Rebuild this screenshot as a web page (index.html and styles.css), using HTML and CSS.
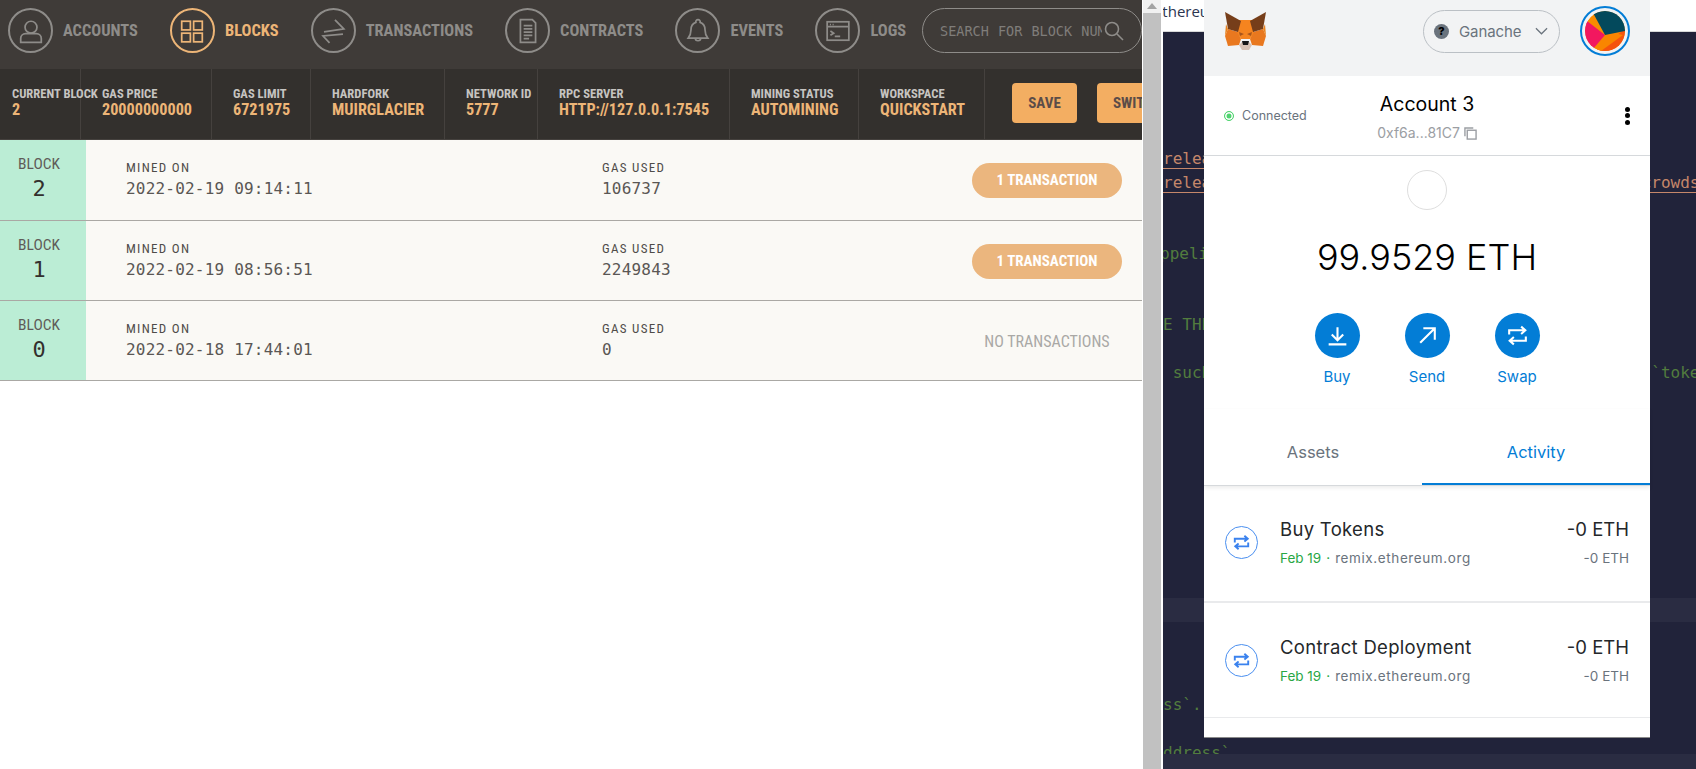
FILE: index.html
```html
<!DOCTYPE html>
<html lang="en">
<head>
  <meta charset="UTF-8">
  <title>Ganache and MetaMask</title>
  <link rel="stylesheet" href="styles.css">
</head>
<body>
  <div class="ganache">
    <nav class="topbar">
      <a class="nav-item">
        <span class="nav-icon"><svg viewBox="0 0 24 24"><circle cx="12" cy="8.500" r="5.500"/><path d="M2.500 22.500v-3.500c0-2.500 2-4.500 4.500-4.500h10c2.500 0 4.500 2 4.500 4.500v3.500z"/></svg></span>
        <span class="nav-label">ACCOUNTS</span>
      </a>
      <a class="nav-item active">
        <span class="nav-icon"><svg viewBox="0 0 24 24"><rect x="2.500" y="3" width="8" height="8"/><rect x="13.500" y="3" width="8" height="8"/><rect x="2.500" y="14" width="8" height="8"/><rect x="13.500" y="14" width="8" height="8"/></svg></span>
        <span class="nav-label">BLOCKS</span>
      </a>
      <a class="nav-item">
        <span class="nav-icon"><svg viewBox="0 0 24 24"><path d="M3.700 12.900L22 10.100L13.800 1.800M21.200 14.800L2.800 16.600L8.800 23"/></svg></span>
        <span class="nav-label">TRANSACTIONS</span>
      </a>
      <a class="nav-item">
        <span class="nav-icon"><svg viewBox="0 0 24 24"><path d="M7 1.500h9l3 3v18H5v-21z"/><path d="M8 7h8M8 10h8M8 13h8M8 16h8M8 19h5"/></svg></span>
        <span class="nav-label">CONTRACTS</span>
      </a>
      <a class="nav-item">
        <span class="nav-icon"><svg viewBox="0 0 24 24"><path d="M12 1.500a2 2 0 0 1 2 2.500c3 1 4.500 3.500 4.500 7 0 3.500 1 5.500 2.500 7.500H3c1.500-2 2.500-4 2.500-7.500 0-3.500 1.500-6 4.500-7a2 2 0 0 1 2-2.500z"/><path d="M9.500 18.500a2.500 2.500 0 0 0 5 0"/></svg></span>
        <span class="nav-label">EVENTS</span>
      </a>
      <a class="nav-item">
        <span class="nav-icon"><svg viewBox="0 0 24 24"><rect x="2" y="3.500" width="20" height="17"/><path d="M2 8h20M5 12l3 2-3 2M9 17h5M4.500 6h1M7 6h1"/></svg></span>
        <span class="nav-label">LOGS</span>
      </a>
      <div class="search">
        <span class="search-text">SEARCH FOR BLOCK NUMBERS OR TX HASHES</span>
        <svg class="search-icon" viewBox="0 0 20 20"><circle cx="8" cy="8" r="6.500"/><path d="M13 13l6 6"/></svg>
      </div>
    </nav>

    <div class="statusbar">
      <div class="stat"><div class="stat-label">CURRENT BLOCK</div><div class="stat-value">2</div></div>
      <div class="stat"><div class="stat-label">GAS PRICE</div><div class="stat-value">20000000000</div></div>
      <div class="stat"><div class="stat-label">GAS LIMIT</div><div class="stat-value">6721975</div></div>
      <div class="stat"><div class="stat-label">HARDFORK</div><div class="stat-value">MUIRGLACIER</div></div>
      <div class="stat"><div class="stat-label">NETWORK ID</div><div class="stat-value">5777</div></div>
      <div class="stat"><div class="stat-label">RPC SERVER</div><div class="stat-value">HTTP://127.0.0.1:7545</div></div>
      <div class="stat"><div class="stat-label">MINING STATUS</div><div class="stat-value">AUTOMINING</div></div>
      <div class="stat"><div class="stat-label">WORKSPACE</div><div class="stat-value">QUICKSTART</div></div>
      <div class="status-actions">
        <button class="action-btn">SAVE</button>
        <button class="action-btn">SWITCH</button>
      </div>
    </div>

    <div class="block-row first">
      <div class="block-num"><div class="block-word">BLOCK</div><div class="block-val">2</div></div>
      <div class="block-col mined"><div class="col-label">MINED ON</div><div class="col-val">2022-02-19 09:14:11</div></div>
      <div class="block-col used"><div class="col-label">GAS USED</div><div class="col-val">106737</div></div>
      <div class="tx-pill">1 TRANSACTION</div>
    </div>
    <div class="block-row">
      <div class="block-num"><div class="block-word">BLOCK</div><div class="block-val">1</div></div>
      <div class="block-col mined"><div class="col-label">MINED ON</div><div class="col-val">2022-02-19 08:56:51</div></div>
      <div class="block-col used"><div class="col-label">GAS USED</div><div class="col-val">2249843</div></div>
      <div class="tx-pill">1 TRANSACTION</div>
    </div>
    <div class="block-row">
      <div class="block-num"><div class="block-word">BLOCK</div><div class="block-val">0</div></div>
      <div class="block-col mined"><div class="col-label">MINED ON</div><div class="col-val">2022-02-18 17:44:01</div></div>
      <div class="block-col used"><div class="col-label">GAS USED</div><div class="col-val">0</div></div>
      <div class="tx-none">NO TRANSACTIONS</div>
    </div>
  </div>

  <div class="scrollbar"><div class="scroll-arrow"></div><div class="scroll-thumb"></div></div>

  <div class="editor">
    <div class="editor-tab">Ethereum</div>
    <div class="editor-body">
      <pre class="code"><span class="link">release</span>
<span class="link">release</span>                                           <span class="link nudge">crowdsale</span>


<span class="cmt nudge">ppelin</span>


<span class="cmt">E THE</span>

<span class="cmt"> such</span>                                              <span class="cmt nudge">`token</span>









<span class="current"> </span>



<span class="cmt">ss`.</span>

<span class="cmt">ddress`</span></pre>
      <div class="terminal"></div>
    </div>
  </div>

  <div class="metamask">
    <header class="mm-header">
      <svg class="fox" viewBox="0 0 41 38">
        <polygon points="3,17 13,20 16,27 14,33 3,34 0,24" fill="#e9781f"/>
        <polygon points="38,17 28,20 25,27 27,33 38,34 41,24" fill="#e9781f"/>
        <polygon points="13,8 28,8 29,20 25,27 16,27 12,20" fill="#f5841f"/>
        <polygon points="0,0 16,9 13,20 3,17" fill="#763e1a"/>
        <polygon points="41,0 25,9 28,20 38,17" fill="#763e1a"/>
        <polygon points="3,17 0,24 1,12" fill="#e8821e"/>
        <polygon points="38,17 41,24 40,12" fill="#e8821e"/>
        <polygon points="14,20 19,22 15,24" fill="#a8561c"/>
        <polygon points="27,20 22,22 26,24" fill="#a8561c"/>
        <polygon points="14,33 17,30 24,30 27,33 24,38 17,38" fill="#d7c1b3"/>
        <polygon points="17,29 24,29 23,33 18,33" fill="#161616"/>
      </svg>
      <div class="network">
        <span class="network-dot">?</span>
        <span class="network-name">Ganache</span>
        <svg class="chevron" viewBox="0 0 14 8"><path d="M1 1l6 6 6-6"/></svg>
      </div>
      <div class="avatar">
        <svg viewBox="0 0 40 40">
          <circle cx="20" cy="20" r="20" fill="#f98b00"/>
          <polygon points="40,18 40,40 10,40" fill="#f5530d"/>
          <polygon points="38,24 16,40 8,40 10,28 20,20" fill="#f98500"/>
          <polygon points="7,0 40,0 40,20 20,24" fill="#03495c"/>
          <polygon points="0,10 2,10 20,24 8,38 0,36" fill="#f2175f"/>
        </svg>
      </div>
    </header>

    <section class="account-row">
      <div class="connected"><span class="connected-dot"></span>Connected</div>
      <div class="account-info">
        <div class="account-name">Account 3</div>
        <div class="account-addr">0xf6a...81C7
          <svg class="copy" viewBox="0 0 14 14"><path d="M1 10V1h9"/><rect x="3.500" y="3.500" width="9.500" height="9.500"/></svg>
        </div>
      </div>
      <div class="kebab"><i></i><i></i><i></i></div>
    </section>

    <section class="balance">
      <div class="token-circle"></div>
      <div class="balance-val">99.9529 ETH</div>
      <div class="mm-actions">
        <div class="mm-action">
          <span class="mm-action-icon"><svg viewBox="0 0 24 24"><path d="M12 4v12M6.500 11l5.500 5.500 5.500-5.500M3.500 20.500h17"/></svg></span>Buy
        </div>
        <div class="mm-action">
          <span class="mm-action-icon"><svg viewBox="0 0 24 24"><path d="M5 19L19 5M8 5h11v11"/></svg></span>Send
        </div>
        <div class="mm-action">
          <span class="mm-action-icon"><svg viewBox="0 0 24 24"><path d="M4 11V7h15M15.500 3.500L19.500 7l-4 3.500M20 13v4H5M8.500 13.500L4.500 17l4 3.500"/></svg></span>Swap
        </div>
      </div>
    </section>

    <div class="tabs">
      <div class="tab">Assets</div>
      <div class="tab tab-on">Activity</div>
    </div>

    <div class="tx-row">
      <span class="tx-icon"><svg viewBox="0 0 24 24"><path d="M5 12V8h13M15 5l3.500 3-3.500 3M19 12v4H6M9 13l-3.500 3L9 19"/></svg></span>
      <div class="tx-main">
        <div class="tx-title">Buy Tokens</div>
        <div class="tx-sub"><span class="tx-date">Feb 19</span><span class="tx-sep">·</span><span class="tx-origin">remix.ethereum.org</span></div>
      </div>
      <div class="tx-amount"><div class="tx-title">-0 ETH</div><div class="tx-sub">-0 ETH</div></div>
    </div>
    <div class="tx-row last">
      <span class="tx-icon"><svg viewBox="0 0 24 24"><path d="M5 12V8h13M15 5l3.500 3-3.500 3M19 12v4H6M9 13l-3.500 3L9 19"/></svg></span>
      <div class="tx-main">
        <div class="tx-title">Contract Deployment</div>
        <div class="tx-sub"><span class="tx-date">Feb 19</span><span class="tx-sep">·</span><span class="tx-origin">remix.ethereum.org</span></div>
      </div>
      <div class="tx-amount"><div class="tx-title">-0 ETH</div><div class="tx-sub">-0 ETH</div></div>
    </div>
  </div>
</body>
</html>
```

FILE: styles.css
```css
* {
  box-sizing: border-box;
}
html, body {
  height: 100%;
}
body {
  margin: 0;
  display: flex;
  overflow: hidden;
  background: white;
  font-family: "Roboto Condensed", "Liberation Sans Narrow", Roboto, sans-serif;
}

/* ganache window */
.ganache {
  width: 1142px;
  flex: none;
  overflow: hidden;
}
.topbar {
  height: 69px;
  padding: 8px 0 0 8px;
  display: flex;
  gap: 32px;
  background-color: #3f3b38;
}
.nav-item {
  display: flex;
  gap: 10px;
  height: 45px;
  align-items: center;
  color: #8e8c89;
}
.nav-item.active {
  color: #edb577;
}
.nav-icon {
  width: 45px;
  height: 45px;
  border: 2px solid currentColor;
  border-radius: 50%;
  display: flex;
  align-items: center;
  justify-content: center;
}
.nav-icon svg {
  width: 26px;
  height: 26px;
  fill: none;
  stroke: currentColor;
  stroke-width: 1.6;
}
.nav-label {
  font-size: 16.4px;
  font-weight: 700;
}
.search {
  width: 220px;
  height: 45px;
  margin-left: -16px;
  padding-left: 17px;
  flex: none;
  border: 1px solid #8e8c89;
  border-radius: 23px;
  display: flex;
  align-items: center;
  overflow: hidden;
}
.search-text {
  width: 162px;
  flex: none;
  overflow: hidden;
  white-space: nowrap;
  font-family: "DejaVu Sans Mono", monospace;
  font-size: 13.5px;
  word-spacing: 1px;
  color: #7f7d7a;
}
.search-icon {
  width: 20px;
  height: 20px;
  margin-left: 2px;
  flex: none;
  fill: none;
  stroke: #8e8c89;
  stroke-width: 1.6;
}
.statusbar {
  height: 71px;
  display: grid;
  grid-template-columns: 81px 131px 99px 134px 93px 192px 129px 126px 1fr;
  background-color: #33302d;
  border-bottom: 1px solid #45413e;
}
.stat {
  padding: 17px 0 0 21px;
  border-right: 1px solid #45413e;
  white-space: nowrap;
}
.stat:first-child {
  padding-left: 12px;
}
.stat-label {
  font-size: 12.6px;
  font-weight: 700;
  line-height: 15px;
  color: #c6c4c1;
}
.stat-value {
  font-size: 16.2px;
  font-weight: 700;
  line-height: 18px;
  color: #edb577;
}
.status-actions {
  padding: 14px 0 0 27px;
  display: flex;
  gap: 20px;
  white-space: nowrap;
}
.action-btn {
  min-width: 65px;
  height: 40px;
  padding: 0 16px;
  flex: none;
  border: none;
  border-radius: 4px;
  background-color: #f3ae62;
  color: #5b4c48;
  font-family: inherit;
  font-size: 15px;
  font-weight: 700;
}
.block-row {
  height: 80px;
  padding-top: 1px;
  display: flex;
  align-items: center;
  background-color: #faf9f5;
  border-bottom: 1px solid #aaa8a4;
}
.block-row.first {
  height: 81px;
}
.block-num {
  width: 86px;
  margin-top: -1px;
  padding: 15px 8px 0 0;
  align-self: stretch;
  text-align: center;
  background-color: #bbedd5;
  color: #5f5b58;
}
.block-word {
  font-size: 15.5px;
  line-height: 18px;
}
.block-val {
  margin-top: 3px;
  font-family: "DejaVu Sans Mono", monospace;
  font-size: 22px;
  line-height: 26px;
  color: #33302d;
}
.block-col {
  margin-top: -3px;
}
.mined {
  width: 476px;
  margin-left: 40px;
}
.used {
  width: 370px;
}
.col-label {
  font-size: 13px;
  line-height: 15px;
  letter-spacing: 1.3px;
  color: #4f4c49;
}
.col-val {
  margin-top: 5px;
  font-family: "DejaVu Sans Mono", monospace;
  font-size: 16px;
  line-height: 18px;
  letter-spacing: 0.2px;
  color: #5a5754;
}
.tx-pill, .tx-none {
  width: 150px;
  height: 35px;
  line-height: 35px;
  text-align: center;
  font-size: 15px;
}
.tx-pill {
  border-radius: 18px;
  background-color: #ebb67e;
  color: white;
  font-weight: 700;
}
.tx-none {
  font-size: 16px;
  color: #a9a8a5;
}

/* scrollbar between the two windows */
.scrollbar {
  width: 18px;
  margin: 0 2px 0 1px;
  flex: none;
  display: flex;
  flex-direction: column;
  background-color: #f1f1f1;
}
.scroll-arrow {
  border-left: 5px solid transparent;
  border-right: 5px solid transparent;
  border-bottom: 6px solid #a3a3a3;
  width: 10px;
  height: 6px;
  margin: 3px auto 4px;
}
.scroll-thumb {
  flex: 1;
  background-color: #c1c1c1;
}

/* editor behind the wallet */
.editor {
  flex: 1;
  min-width: 0;
  display: flex;
  flex-direction: column;
}
.editor-tab {
  height: 32px;
  padding-top: 1px;
  overflow: hidden;
  white-space: nowrap;
  text-indent: -9px;
  font-family: "Open Sans", sans-serif;
  font-size: 15px;
  color: #2c3550;
  border-bottom: 1px solid #d8d8d8;
}
.editor-body {
  flex: 1;
  display: flex;
  flex-direction: column;
  background-color: #21233a;
  overflow: hidden;
  min-height: 0;
}
.code {
  height: 722px;
  margin: 0;
  padding-top: 115px;
  flex: none;
  font-family: "DejaVu Sans Mono", monospace;
  font-size: 16px;
  line-height: 23.75px;
  white-space: pre;
  overflow: hidden;
}
.link {
  color: #c5876a;
  border-bottom: 1px solid #c5876a;
}
.cmt {
  color: #527c3e;
}
.nudge {
  margin-left: -3px;
}
.current {
  display: block;
  height: 23.75px;
  margin-bottom: -23.75px;
  background-color: #2a2c42;
}
.terminal {
  flex: 1;
  background-color: #2a2c42;
}

/* metamask popup */
.metamask {
  position: absolute;
  left: 1204px;
  top: 0;
  width: 446px;
  height: 738px;
  background: white;
  border-bottom: 1px solid #8a8a8a;
  font-family: Inter, sans-serif;
}
.mm-header {
  height: 76px;
  padding: 0 20px 0 21px;
  display: flex;
  align-items: center;
  background-color: #f2f3f4;
}
.fox {
  width: 41px;
  height: 38px;
  margin-top: -14px;
}
.network {
  width: 137px;
  height: 43px;
  margin: -14px 0 0 157px;
  padding-left: 10px;
  display: flex;
  align-items: center;
  border: 1px solid #bbc0c5;
  border-radius: 22px;
}
.network-dot {
  width: 15px;
  height: 15px;
  flex: none;
  border-radius: 50%;
  background-color: #6a737d;
  color: black;
  font-size: 11px;
  font-weight: 800;
  line-height: 15px;
  text-align: center;
}
.network-name {
  width: 66px;
  margin-left: 10px;
  font-size: 15px;
  letter-spacing: -0.1px;
  color: #6a737d;
}
.chevron {
  width: 13px;
  height: 8px;
  margin-left: 10px;
  fill: none;
  stroke: #6a737d;
  stroke-width: 1.3;
}
.avatar {
  width: 50px;
  height: 50px;
  margin: -14px 0 0 20px;
  padding: 3px;
  border: 2px solid #037dd6;
  border-radius: 50%;
}
.avatar svg {
  width: 40px;
  height: 40px;
  display: block;
  border-radius: 50%;
}
.account-row {
  height: 80px;
  padding: 0 20px;
  display: grid;
  grid-template-columns: 1fr auto 1fr;
  align-items: center;
  border-bottom: 1px solid #d6d9dc;
}
.connected {
  display: flex;
  align-items: center;
  font-size: 12.5px;
  color: #6a737d;
}
.connected-dot {
  width: 10px;
  height: 10px;
  margin-right: 8px;
  border: 1px solid #4fd46f;
  border-radius: 50%;
  background: #4fd46f;
  box-shadow: inset 0 0 0 1.5px white;
}
.account-info {
  padding-top: 4px;
  text-align: center;
}
.account-name {
  font-size: 19.5px;
  line-height: 22px;
  color: black;
}
.account-addr {
  margin-top: 9px;
  font-size: 14px;
  line-height: 18px;
  color: #9b9ea3;
}
.copy {
  width: 13px;
  height: 13px;
  vertical-align: -2px;
  fill: none;
  stroke: #9b9ea3;
  stroke-width: 1.5;
}
.kebab {
  display: flex;
  flex-direction: column;
  justify-self: end;
  gap: 1.500px;
}
.kebab i {
  width: 5px;
  height: 5px;
  border-radius: 50%;
  background: black;
}
.balance {
  height: 253px;
  padding-top: 14px;
  display: flex;
  flex-direction: column;
  align-items: center;
}
.token-circle {
  width: 40px;
  height: 40px;
  border: 1px solid #dedede;
  border-radius: 50%;
}
.balance-val {
  margin-top: 22px;
  font-size: 36px;
  font-weight: 300;
  line-height: 50px;
  color: black;
}
.mm-actions {
  margin-top: 31px;
  display: flex;
  gap: 45px;
}
.mm-action {
  width: 45px;
  display: flex;
  flex-direction: column;
  align-items: center;
  font-size: 15px;
  color: #037dd6;
}
.mm-action-icon {
  width: 45px;
  height: 45px;
  margin-bottom: 9px;
  padding: 10px;
  border-radius: 50%;
  background-color: #037dd6;
}
.mm-action-icon svg {
  display: block;
  fill: none;
  stroke: white;
  stroke-width: 2;
}
.tabs {
  height: 77px;
  display: grid;
  grid-template-columns: 218px 228px;
  border-bottom: 1px solid #d6d9dc;
  box-shadow: 0 2px 4px rgba(0, 0, 0, 0.08);
}
.tab {
  padding-top: 33px;
  text-align: center;
  font-size: 16.5px;
  color: #6a737d;
}
.tab-on {
  color: #037dd6;
  border-bottom: 2px solid #037dd6;
}
.tx-row {
  height: 117px;
  padding: 0 21px 2px;
  display: flex;
  align-items: center;
  border-bottom: 2px solid #e9eaec;
}
.tx-row.last {
  height: 115px;
  padding-bottom: 0;
  border-bottom-width: 1px;
}
.tx-icon {
  width: 33px;
  height: 33px;
  padding: 4px;
  flex: none;
  border: 1px solid #4a8ff0;
  border-radius: 50%;
}
.tx-icon svg {
  display: block;
  fill: none;
  stroke: #3b82ee;
  stroke-width: 2;
}
.tx-main {
  margin-left: 22px;
  flex: 1;
}
.tx-title {
  font-size: 18.5px;
  line-height: 22px;
  letter-spacing: 0.3px;
  color: #24272a;
}
.tx-amount .tx-title {
  letter-spacing: 0;
}
.tx-sub {
  margin-top: 9px;
  font-size: 13.5px;
  line-height: 18px;
  color: #6a737d;
}
.tx-date {
  color: #28a745;
}
.tx-sep {
  margin: 0 5px;
  color: #28a745;
}
.tx-origin {
  letter-spacing: 0.6px;
}
.tx-amount {
  text-align: right;
}
```
